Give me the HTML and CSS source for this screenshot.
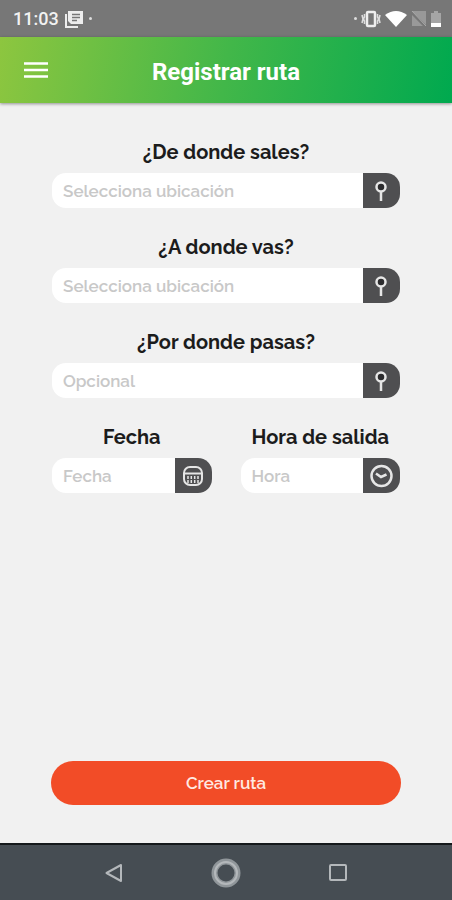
FILE: index.html
```html
<!DOCTYPE html>
<html lang="es">
<head>
  <meta charset="UTF-8">
  <meta name="viewport" content="width=device-width, initial-scale=1.0">
  <title>Registrar ruta</title>
  <link rel="stylesheet" href="styles.css">
</head>
<body>
  <div class="status-bar">
    <div class="status-group">
      <span class="clock">11:03</span>
      <svg width="18" height="18" viewBox="0 0 18 18">
        <path d="M1 4v13h12" fill="none" stroke="#eee" stroke-width="2"/>
        <path d="M3 1h15v13H6l-3-3z" fill="#eee"/>
        <path d="M7 4.500h8M7 7.500h8M7 10.500h5" stroke="#777" stroke-width="1.400"/>
      </svg>
      <span class="dot"></span>
    </div>
    <div class="status-group status-right">
      <span class="dot"></span>
      <svg width="20" height="18" viewBox="0 0 20 18">
        <rect x="6" y="2" width="8" height="14" rx="1" fill="none" stroke="#eee" stroke-width="2.500"/>
        <path d="M3.500 4v3l-1 2 1 2v3M1 5l1 4-1 4M16.500 4v3l1 2-1 2v3M19 5l-1 4 1 4" fill="none" stroke="#ddd" stroke-width="1.600"/>
      </svg>
      <svg width="22" height="18" viewBox="0 0 22 18">
        <path d="M0 5Q11-3 22 5L11 17z" fill="#fff"/>
      </svg>
      <svg width="16" height="18" viewBox="0 0 16 18">
        <path d="M1 1h14v15H1z" fill="#999"/>
        <path d="M0 2l15 15" stroke="#777" stroke-width="3"/>
        <path d="M1 1l14 15" stroke="#aaa" stroke-width="1"/>
      </svg>
      <svg width="10" height="18" viewBox="0 0 10 18">
        <path d="M3 1h4v2h3v14H0V3h3z" fill="#a5a5a5"/>
        <path d="M0 13h10v4H0z" fill="#fff"/>
      </svg>
    </div>
  </div>

  <header class="toolbar">
    <button class="menu-btn" type="button" aria-label="Menú">
      <svg width="24" height="18" viewBox="0 0 24 18">
        <path d="M0 2.500h24M0 9h24M0 15.500h24" stroke="#fff" stroke-width="2.500"/>
      </svg>
    </button>
    <h1>Registrar ruta</h1>
  </header>

  <form class="route-form">
    <div class="field">
      <label for="origen">¿De donde sales?</label>
      <div class="input-group">
        <input type="text" id="origen" placeholder="Selecciona ubicación">
        <button type="button" aria-label="Elegir origen">
          <svg width="24" height="24" viewBox="0 0 24 24" fill="none" stroke="#e6e6e6" stroke-width="2.500">
            <circle cx="11" cy="8" r="4.500" fill="#2b2b2d"/>
            <path d="M11 12v10"/>
          </svg>
        </button>
      </div>
    </div>

    <div class="field">
      <label for="destino">¿A donde vas?</label>
      <div class="input-group">
        <input type="text" id="destino" placeholder="Selecciona ubicación">
        <button type="button" aria-label="Elegir destino">
          <svg width="24" height="24" viewBox="0 0 24 24" fill="none" stroke="#e6e6e6" stroke-width="2.500">
            <circle cx="11" cy="8" r="4.500" fill="#2b2b2d"/>
            <path d="M11 12v10"/>
          </svg>
        </button>
      </div>
    </div>

    <div class="field">
      <label for="paso">¿Por donde pasas?</label>
      <div class="input-group">
        <input type="text" id="paso" placeholder="Opcional">
        <button type="button" aria-label="Elegir punto de paso">
          <svg width="24" height="24" viewBox="0 0 24 24" fill="none" stroke="#e6e6e6" stroke-width="2.500">
            <circle cx="11" cy="8" r="4.500" fill="#2b2b2d"/>
            <path d="M11 12v10"/>
          </svg>
        </button>
      </div>
    </div>

    <div class="field-row">
      <div class="field">
        <label for="fecha">Fecha</label>
        <div class="input-group">
          <input type="text" id="fecha" placeholder="Fecha">
          <button type="button" aria-label="Elegir fecha">
            <svg width="24" height="24" viewBox="0 0 24 24" fill="none" stroke="#e6e6e6" stroke-width="2">
              <rect x="3" y="3" width="18" height="18" rx="6"/>
              <path d="M3 9.500h18"/>
              <path d="M7 12v7M10.300 12v7M13.700 12v7M17 12v7" stroke-width="1.500" stroke-dasharray="3 1"/>
            </svg>
          </button>
        </div>
      </div>
      <div class="field">
        <label for="hora">Hora de salida</label>
        <div class="input-group">
          <input type="text" id="hora" placeholder="Hora">
          <button type="button" aria-label="Elegir hora">
            <svg width="24" height="24" viewBox="0 0 24 24" fill="none" stroke="#e6e6e6" stroke-width="2.500">
              <circle cx="11.500" cy="12" r="10"/>
              <path d="M6 9.500L11 13l5.500-2.500"/>
            </svg>
          </button>
        </div>
      </div>
    </div>

    <button class="submit-btn" type="submit">Crear ruta</button>
  </form>

  <nav class="nav-bar">
    <button type="button" aria-label="Atrás">
      <svg width="30" height="30" viewBox="0 0 30 30" fill="none" stroke="#b4b8bb" stroke-width="2">
        <path d="M22 7v16L7.500 15z" stroke-linejoin="round"/>
      </svg>
    </button>
    <button type="button" aria-label="Inicio">
      <svg width="30" height="30" viewBox="0 0 30 30" fill="none">
        <circle cx="15" cy="15" r="11.500" stroke="#90969a" stroke-width="6"/>
        <circle cx="15" cy="15" r="11" stroke="#b4b8bb" stroke-width="2"/>
      </svg>
    </button>
    <button type="button" aria-label="Recientes">
      <svg width="30" height="30" viewBox="0 0 30 30" fill="none" stroke="#b4b8bb" stroke-width="2">
        <rect x="7" y="7" width="16" height="15" rx="1"/>
      </svg>
    </button>
  </nav>
</body>
</html>
```
FILE: styles.css
```css
* {
  box-sizing: border-box;
}
body {
  margin: 0;
  min-height: 100vh;
  display: flex;
  flex-direction: column;
  background: #f1f1f1;
  font-family: Raleway, Inter, sans-serif;
}
button {
  padding: 0;
  border: none;
  background: none;
  cursor: pointer;
}
svg {
  display: block;
}
.status-bar {
  display: flex;
  justify-content: space-between;
  align-items: center;
  height: 37px;
  padding: 0 11px 0 13px;
  background: #777;
}
.status-group {
  display: flex;
  align-items: center;
  gap: 6px;
}
.status-right {
  gap: 4px;
}
.clock {
  color: #f2f2f2;
  font-family: Roboto, sans-serif;
  font-size: 18px;
  font-weight: 500;
}
.dot {
  width: 3px;
  height: 3px;
  border-radius: 50%;
  background: #ddd;
}
.toolbar {
  display: grid;
  grid-template-columns: 24px 1fr 24px;
  align-items: center;
  height: 66px;
  padding: 0 24px;
  background: linear-gradient(100deg, #8dc63f, #42b749 50%, #00a94f);
  box-shadow: 0 1px 3px rgba(0, 0, 0, 0.4);
}
.toolbar h1 {
  margin: 0;
  padding-top: 3px;
  color: #fff;
  font-family: Roboto, sans-serif;
  font-size: 24px;
  font-weight: 700;
  text-align: center;
}
.route-form {
  flex: 1;
  display: flex;
  flex-direction: column;
  gap: 27px;
  padding: 37px 52px 38px;
}
.field {
  display: flex;
  flex-direction: column;
  gap: 9px;
  min-width: 0;
}
.field label {
  color: #1c1c1c;
  font-size: 20px;
  font-weight: 700;
  line-height: 24px;
  text-align: center;
}
.field-row {
  display: grid;
  grid-template-columns: 1fr 1fr;
  gap: 29px;
}
.input-group {
  display: flex;
  height: 35px;
  border-radius: 14px;
  background: #fff;
  overflow: hidden;
}
.input-group input {
  flex: 1;
  min-width: 0;
  padding: 0 11px;
  border: none;
  outline: none;
  background: none;
  color: #333;
  font-family: inherit;
  font-size: 17px;
  font-weight: 600;
}
.input-group input::placeholder {
  color: #c8c8c8;
  opacity: 1;
}
.input-group button {
  display: flex;
  align-items: center;
  justify-content: center;
  width: 37px;
  background: #4f4f51;
}
.submit-btn {
  height: 44px;
  margin: auto -1px 0;
  border-radius: 22px;
  background: #f24c27;
  color: #ffe9e2;
  font-family: inherit;
  font-size: 17px;
  font-weight: 600;
}
.nav-bar {
  display: flex;
  justify-content: center;
  align-items: center;
  gap: 82px;
  height: 57px;
  border-top: 2px solid #15191b;
  background: #464d53;
}
```
